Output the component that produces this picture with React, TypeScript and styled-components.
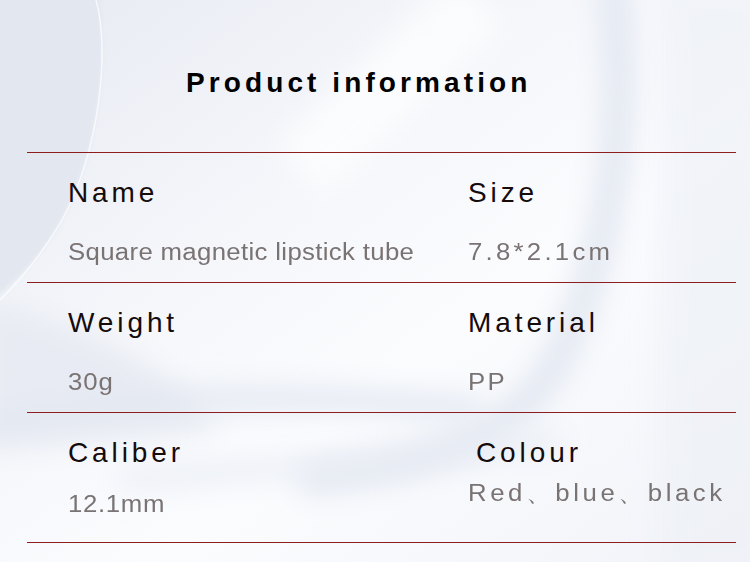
import React from "react";
import styled, { createGlobalStyle } from "styled-components";

const GlobalStyle = createGlobalStyle`
  html, body {
    margin: 0;
    padding: 0;
    background: #f2f4f9;
  }
`;

const Page = styled.div`
  position: relative;
  width: 750px;
  height: 562px;
  overflow: hidden;
  background: #f2f4f9;
  font-family: "Liberation Sans", Arial, sans-serif;
`;

const Backdrop = styled.svg`
  position: absolute;
  left: 0;
  top: 0;
  z-index: 0;
`;

const Content = styled.div`
  position: relative;
  z-index: 1;
`;

const Title = styled.h1`
  box-sizing: border-box;
  height: 152px;
  margin: 0;
  padding: 69px 0 0 186px;
  font-size: 28px;
  line-height: 28px;
  font-weight: bold;
  letter-spacing: 4.1px;
  color: #000;
`;

const Table = styled.div`
  margin-left: 27px;
  width: 709px;
  border-bottom: 1px solid #8c1e1e;
`;

const Row = styled.div`
  box-sizing: border-box;
  display: grid;
  grid-template-columns: 400px 1fr;
  height: 130px;
  border-top: 1px solid #8c1e1e;
`;

const Cell = styled.div`
  padding: 26px 0 0 41px;
`;

const Label = styled.div<{ $indent?: number }>`
  padding-left: ${p => p.$indent ?? 0}px;
  font-size: 28px;
  line-height: 28px;
  letter-spacing: 3.9px;
  color: #150b0b;
  white-space: nowrap;
`;

// the value text in the picture is a horizontally stretched Arial
const Value = styled.div<{ $gap: number; $spacing: number; $size?: number }>`
  margin-top: ${p => p.$gap}px;
  font-size: ${p => p.$size ?? 23}px;
  line-height: ${p => p.$size ?? 23}px;
  letter-spacing: ${p => p.$spacing}px;
  color: #7a7373;
  white-space: nowrap;
  transform: scaleX(1.12);
  transform-origin: left center;
`;

interface Spec {
  label: string;
  value: string;
  gap: number;
  spacing: number;
  indent?: number;
  size?: number;
}

const rows: Spec[][] = [
  [
    { label: "Name", value: "Square magnetic lipstick tube", gap: 34, spacing: 0.3 },
    { label: "Size", value: "7.8*2.1cm", gap: 34, spacing: 2.9 },
  ],
  [
    { label: "Weight", value: "30g", gap: 34, spacing: 0.8 },
    { label: "Material", value: "PP", gap: 34, spacing: 2 },
  ],
  [
    { label: "Caliber", value: "12.1mm", gap: 26, spacing: 0.6 },
    { label: "Colour", value: "Red、blue、black", gap: 15, spacing: 3.2, indent: 8 },
  ],
];

const Swooshes = () => (
  <Backdrop width={750} height={562} viewBox="0 0 750 562">
    <defs>
      <linearGradient id="bg" x1="0" y1="0" x2="1" y2="1">
        <stop offset="0" stopColor="#e7eaf2" />
        <stop offset="0.35" stopColor="#f4f6fa" />
        <stop offset="0.6" stopColor="#fbfcfe" />
        <stop offset="1" stopColor="#f1f3f8" />
      </linearGradient>
      <filter id="blur" filterUnits="userSpaceOnUse" x="-100" y="-100" width="950" height="762">
        <feGaussianBlur stdDeviation="14" />
      </filter>
      <filter id="soft" filterUnits="userSpaceOnUse" x="-100" y="-100" width="950" height="762">
        <feGaussianBlur stdDeviation="2" />
      </filter>
    </defs>
    <rect width="750" height="562" fill="url(#bg)" />
    <path d="M-20 -20 H96 C110 50 100 150 62 220 C42 255 20 280 -20 310 Z" fill="#e3e7f0" filter="url(#soft)" />
    <path d="M-20 300 C60 320 140 340 220 430 L-20 450 Z" fill="#e8ebf3" filter="url(#blur)" />
    <path d="M96 0 C110 50 100 150 62 220 C42 255 20 280 0 300" stroke="#ffffff" strokeWidth="1.5" fill="none" opacity="0.7" />
    <path d="M300 170 L480 0" stroke="#ffffff" strokeWidth="70" opacity="0.7" filter="url(#blur)" />
    <path d="M612 -20 C630 120 612 260 552 370 C507 440 420 470 300 480" stroke="#e2e7f1" strokeWidth="30" fill="none" filter="url(#blur)" />
    <rect x="660" y="-20" width="120" height="600" fill="#eef1f7" filter="url(#blur)" opacity="0.7" />
    <path d="M-20 425 C150 395 300 392 480 410" stroke="#e3e8f2" strokeWidth="24" fill="none" filter="url(#blur)" />
    <path d="M120 480 C260 470 400 460 560 440" stroke="#e8ecf4" strokeWidth="18" fill="none" filter="url(#blur)" />
  </Backdrop>
);

const App = () => (
  <Page>
    <GlobalStyle />
    <Swooshes />
    <Content>
      <Title>Product information</Title>
      <Table>
        {rows.map((row, i) => (
          <Row key={i}>
            {row.map(c => (
              <Cell key={c.label}>
                <Label $indent={c.indent}>{c.label}</Label>
                <Value $gap={c.gap} $spacing={c.spacing} $size={c.size}>{c.value}</Value>
              </Cell>
            ))}
          </Row>
        ))}
      </Table>
    </Content>
  </Page>
);

export default App;
